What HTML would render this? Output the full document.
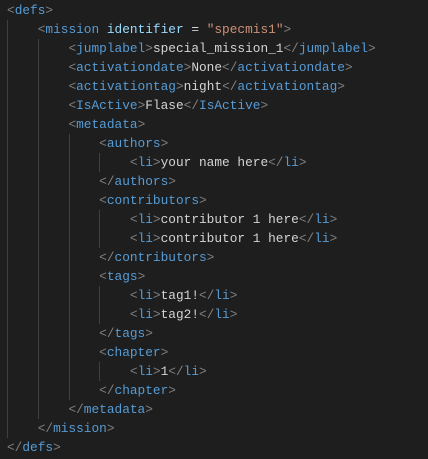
<!DOCTYPE html>
<html><head><style>
html,body{margin:0;padding:0;background:#1e1e1e;}
body{width:428px;height:459px;position:relative;overflow:hidden;font-family:"Liberation Mono",monospace;font-size:12.8px;}
.l{position:absolute;left:7px;height:19px;line-height:19px;white-space:pre;color:#d4d4d4;}
.b{color:#808080}.t{color:#569cd6}.a{color:#9cdcfe}.s{color:#ce9178}
.g{position:absolute;width:1px;background:#404040;}
</style></head><body>
<div class="g" style="left:7px;top:20px;height:418px"></div>
<div class="g" style="left:38px;top:39px;height:380px"></div>
<div class="g" style="left:69px;top:134px;height:266px"></div>
<div class="g" style="left:99px;top:153px;height:19px"></div>
<div class="g" style="left:99px;top:210px;height:38px"></div>
<div class="g" style="left:99px;top:286px;height:38px"></div>
<div class="g" style="left:99px;top:362px;height:19px"></div>

<div class="l" style="top:1px"><span class="b">&lt;</span><span class="t">defs</span><span class="b">&gt;</span></div>
<div class="l" style="top:20px">    <span class="b">&lt;</span><span class="t">mission</span> <span class="a">identifier</span> = <span class="s">"specmis1"</span><span class="b">&gt;</span></div>
<div class="l" style="top:39px">        <span class="b">&lt;</span><span class="t">jumplabel</span><span class="b">&gt;</span>special_mission_1<span class="b">&lt;/</span><span class="t">jumplabel</span><span class="b">&gt;</span></div>
<div class="l" style="top:58px">        <span class="b">&lt;</span><span class="t">activationdate</span><span class="b">&gt;</span>None<span class="b">&lt;/</span><span class="t">activationdate</span><span class="b">&gt;</span></div>
<div class="l" style="top:77px">        <span class="b">&lt;</span><span class="t">activationtag</span><span class="b">&gt;</span>night<span class="b">&lt;/</span><span class="t">activationtag</span><span class="b">&gt;</span></div>
<div class="l" style="top:96px">        <span class="b">&lt;</span><span class="t">IsActive</span><span class="b">&gt;</span>Flase<span class="b">&lt;/</span><span class="t">IsActive</span><span class="b">&gt;</span></div>
<div class="l" style="top:115px">        <span class="b">&lt;</span><span class="t">metadata</span><span class="b">&gt;</span></div>
<div class="l" style="top:134px">            <span class="b">&lt;</span><span class="t">authors</span><span class="b">&gt;</span></div>
<div class="l" style="top:153px">                <span class="b">&lt;</span><span class="t">li</span><span class="b">&gt;</span>your name here<span class="b">&lt;/</span><span class="t">li</span><span class="b">&gt;</span></div>
<div class="l" style="top:172px">            <span class="b">&lt;/</span><span class="t">authors</span><span class="b">&gt;</span></div>
<div class="l" style="top:191px">            <span class="b">&lt;</span><span class="t">contributors</span><span class="b">&gt;</span></div>
<div class="l" style="top:210px">                <span class="b">&lt;</span><span class="t">li</span><span class="b">&gt;</span>contributor 1 here<span class="b">&lt;/</span><span class="t">li</span><span class="b">&gt;</span></div>
<div class="l" style="top:229px">                <span class="b">&lt;</span><span class="t">li</span><span class="b">&gt;</span>contributor 1 here<span class="b">&lt;/</span><span class="t">li</span><span class="b">&gt;</span></div>
<div class="l" style="top:248px">            <span class="b">&lt;/</span><span class="t">contributors</span><span class="b">&gt;</span></div>
<div class="l" style="top:267px">            <span class="b">&lt;</span><span class="t">tags</span><span class="b">&gt;</span></div>
<div class="l" style="top:286px">                <span class="b">&lt;</span><span class="t">li</span><span class="b">&gt;</span>tag1!<span class="b">&lt;/</span><span class="t">li</span><span class="b">&gt;</span></div>
<div class="l" style="top:305px">                <span class="b">&lt;</span><span class="t">li</span><span class="b">&gt;</span>tag2!<span class="b">&lt;/</span><span class="t">li</span><span class="b">&gt;</span></div>
<div class="l" style="top:324px">            <span class="b">&lt;/</span><span class="t">tags</span><span class="b">&gt;</span></div>
<div class="l" style="top:343px">            <span class="b">&lt;</span><span class="t">chapter</span><span class="b">&gt;</span></div>
<div class="l" style="top:362px">                <span class="b">&lt;</span><span class="t">li</span><span class="b">&gt;</span>1<span class="b">&lt;/</span><span class="t">li</span><span class="b">&gt;</span></div>
<div class="l" style="top:381px">            <span class="b">&lt;/</span><span class="t">chapter</span><span class="b">&gt;</span></div>
<div class="l" style="top:400px">        <span class="b">&lt;/</span><span class="t">metadata</span><span class="b">&gt;</span></div>
<div class="l" style="top:419px">    <span class="b">&lt;/</span><span class="t">mission</span><span class="b">&gt;</span></div>
<div class="l" style="top:438px"><span class="b">&lt;/</span><span class="t">defs</span><span class="b">&gt;</span></div>
</body></html>
